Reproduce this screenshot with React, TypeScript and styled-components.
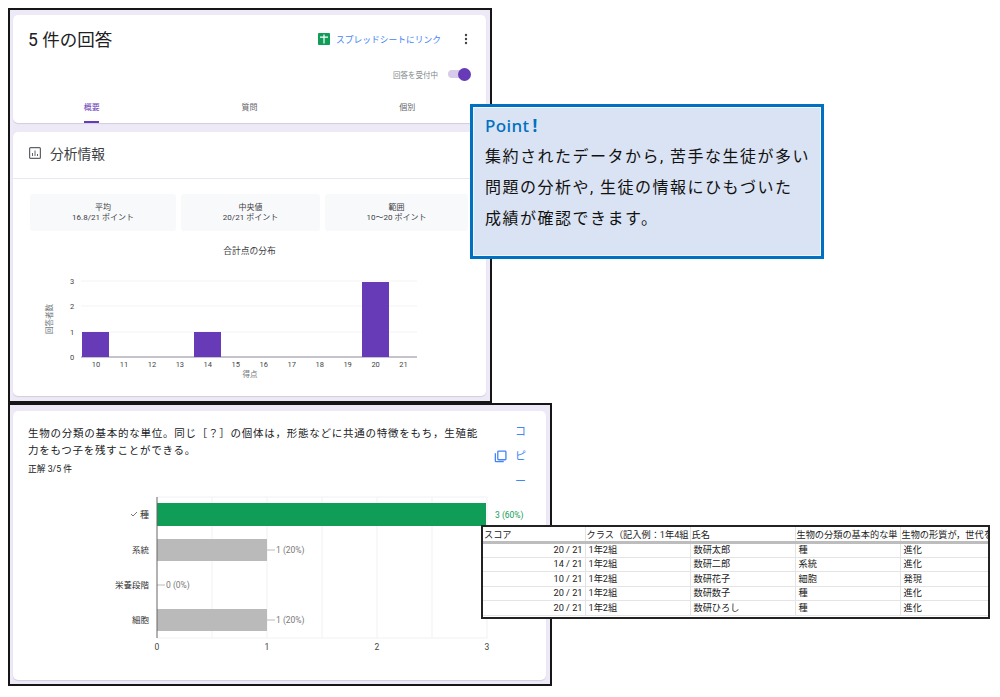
import React from 'react'
import styled, { createGlobalStyle } from 'styled-components'

const GlobalStyle = createGlobalStyle`
  html, body {
    margin: 0;
    padding: 0;
    background: #fff;
    font-family: Roboto, "Noto Sans CJK JP", sans-serif;
  }
`

const Page = styled.div`
  position: relative;
  width: 1000px;
  height: 697px;
  padding: 8px 0 0 8px;
  box-sizing: border-box;
  overflow: hidden;
`

const Shot = styled.section<{ $width: number; $height: number; $top: number }>`
  box-sizing: border-box;
  width: ${p => p.$width}px;
  height: ${p => p.$height}px;
  padding: ${p => p.$top}px 4px 0 3px;
  border: 2px solid #161616;
  background: #ede9f6;
  display: flex;
  flex-direction: column;
  gap: 9px;
`

const Card = styled.div<{ $height: number }>`
  height: ${p => p.$height}px;
  flex-shrink: 0;
  background: #fff;
  border-radius: 5px;
  box-shadow: 0 1px 1px rgba(60, 50, 90, 0.15);
  display: flex;
  flex-direction: column;
`

const HeaderRow = styled.div`
  box-sizing: border-box;
  height: 50px;
  padding: 0 18px 4px 15px;
  display: flex;
  align-items: center;
  justify-content: space-between;
`

const Title = styled.h1`
  margin: 0;
  font-size: 17.5px;
  font-weight: 400;
  color: #202124;
`

const HeaderActions = styled.div`
  display: flex;
  align-items: center;
  margin-top: 2px;
`

const SheetLink = styled.a`
  display: flex;
  align-items: center;
  gap: 6px;
  margin-right: 23px;
  font-size: 8.75px;
  color: #4285f4;
`

const AcceptRow = styled.div`
  height: 18px;
  padding-right: 18px;
  display: flex;
  align-items: center;
  justify-content: flex-end;
  gap: 10px;
  font-size: 7.5px;
  color: #80868b;
`

const Track = styled.div`
  width: 20px;
  height: 8px;
  border-radius: 4px;
  background: #d6cbe9;
  display: flex;
  align-items: center;
  justify-content: flex-end;
`

const Thumb = styled.div`
  width: 13px;
  height: 13px;
  flex-shrink: 0;
  margin-right: -3px;
  border-radius: 50%;
  background: #673ab7;
`

const Tabs = styled.div`
  height: 40px;
  display: grid;
  grid-template-columns: repeat(3, 1fr);
`

const Tab = styled.div<{ $active?: boolean }>`
  padding-top: 19px;
  display: flex;
  flex-direction: column;
  align-items: center;
  font-size: 8px;
  line-height: 12px;
  color: ${p => (p.$active ? '#673ab7' : '#5f6368')};
`

const TabMark = styled.div`
  width: 15px;
  height: 2px;
  margin-top: auto;
  background: #673ab7;
`

const SectionHead = styled.div`
  box-sizing: border-box;
  height: 47px;
  padding: 0 0 4px 16px;
  border-bottom: 1px solid #e8e8ee;
  display: flex;
  align-items: center;
  gap: 9px;
  font-size: 13.75px;
  color: #3c4043;
`

const Stats = styled.div`
  margin: 15px 18px 0 17px;
  display: grid;
  grid-template-columns: 146fr 139fr 143fr;
  gap: 5px;
`

const Stat = styled.div`
  height: 36px;
  padding-top: 1px;
  border-radius: 3px;
  background: #f8f9fa;
  display: flex;
  flex-direction: column;
  align-items: center;
  justify-content: center;
  color: #3c4043;
  font-size: 8px;
  line-height: 10px;
`

const ChartTitle = styled.div`
  margin-top: 14px;
  text-align: center;
  font-size: 8.75px;
  line-height: 12px;
  color: #3c4043;
`

const Chart = styled.svg`
  display: block;
  font-family: Roboto, "Noto Sans CJK JP", sans-serif;
`

const QuestionHead = styled.div`
  padding: 8px 0 0 15px;
  display: flex;
`

const QuestionBody = styled.div`
  width: 456px;
  margin-top: 6px;
  flex-shrink: 0;
`

const QuestionText = styled.p`
  margin: 0;
  font-size: 10.5px;
  letter-spacing: 0.75px;
  line-height: 17px;
  color: #202124;
`

const Score = styled.div`
  margin-top: 4px;
  font-size: 8.75px;
  line-height: 12px;
  color: #202124;
`

const CopyAction = styled.div`
  margin-left: 10px;
  display: flex;
  align-items: center;
  gap: 8px;
  color: #4285f4;
`

const CopyLetters = styled.div`
  display: flex;
  flex-direction: column;
  font-size: 11px;
  line-height: 25px;
`

const PointBox = styled.aside`
  position: absolute;
  left: 470px;
  top: 104px;
  box-sizing: border-box;
  width: 354px;
  height: 155px;
  padding: 8px 0 0 12px;
  border: 3px solid #0070c0;
  outline: 1px solid #f0f4fb;
  outline-offset: -4px;
  background: #dae3f3;
  color: #111;
`

const PointTitle = styled.div`
  font-family: "Noto Sans", sans-serif;
  font-size: 17px;
  font-weight: 500;
  line-height: 22px;
  color: #0070c0;
  letter-spacing: 0.4px;
`

const PointMark = styled.span`
  margin-left: 3px;
  font-weight: 700;
`

const PointText = styled.p`
  margin: 4px 0 0;
  font-size: 16px;
  letter-spacing: 1.5px;
  line-height: 31px;
  white-space: nowrap;
`

const SheetBox = styled.div`
  position: absolute;
  left: 481px;
  top: 525px;
  box-sizing: border-box;
  width: 509px;
  height: 94px;
  border: 2px solid #222;
  background: #fff;
  overflow: hidden;
`

const SheetTable = styled.table`
  width: 507px;
  border-collapse: collapse;
  table-layout: fixed;
  font-size: 9.2px;
  color: #222;
`

const HeadCell = styled.th`
  height: 14px;
  padding: 0 0 0 1px;
  border-right: 1px solid #e4e4e4;
  border-bottom: 3px solid #bdbdbd;
  font-weight: 400;
  text-align: left;
  line-height: 13px;
  white-space: nowrap;
  overflow: hidden;
`

const Row = styled.tr`
  height: 14.5px;
`

const Cell = styled.td<{ $right?: boolean }>`
  padding: ${p => (p.$right ? '0 2px 0 0' : '0 0 0 3px')};
  border-right: 1px solid #e4e4e4;
  border-bottom: 1px solid #e4e4e4;
  text-align: ${p => (p.$right ? 'right' : 'left')};
  line-height: 12px;
  white-space: nowrap;
  overflow: hidden;
`

const columns = [102, 105, 105, 105, 90]
const headers = [
  'スコア',
  'クラス（記入例：1年4組',
  '氏名',
  '生物の分類の基本的な単',
  '生物の形質が，世代を',
]
const rows = [
  ['20 / 21', '1年2組', '数研太郎', '種', '進化'],
  ['14 / 21', '1年2組', '数研二郎', '系統', '進化'],
  ['10 / 21', '1年2組', '数研花子', '細胞', '発現'],
  ['20 / 21', '1年2組', '数研数子', '種', '進化'],
  ['20 / 21', '1年2組', '数研ひろし', '種', '進化'],
]

const histogramLabels = [10, 11, 12, 13, 14, 15, 16, 17, 18, 19, 20, 21]
const histogramBars = [
  { x: 82, y: 332, h: 25 },
  { x: 194, y: 332, h: 25 },
  { x: 362, y: 282, h: 75 },
]

const answers = [
  { label: '系統', y: 539, h: 22, w: 110, text: '1 (20%)' },
  { label: '栄養段階', y: 574, h: 22, w: 0, text: '0 (0%)' },
  { label: '細胞', y: 609, h: 22, w: 110, text: '1 (20%)' },
]

const Histogram = () => (
  <Chart width={473} height={139} viewBox="13 257 473 139">
    {[281, 306, 332].map(y => (
      <line key={y} x1={81} x2={417} y1={y} y2={y} stroke="#f3f3f3" />
    ))}
    <line x1={81} x2={417} y1={357} y2={357} stroke="#b4afbd" strokeWidth={1.5} />
    {histogramBars.map(b => (
      <rect key={b.x} x={b.x} y={b.y} width={27} height={b.h} fill="#673ab7" />
    ))}
    <g fontSize={7.5} fill="#444" textAnchor="middle">
      {[3, 2, 1, 0].map((n, i) => (
        <text key={n} x={72} y={[284, 309, 335, 360][i]}>
          {n}
        </text>
      ))}
      {histogramLabels.map((n, i) => (
        <text key={n} x={96 + i * 27.96} y={367}>
          {n}
        </text>
      ))}
    </g>
    <text x={250} y={377} fontSize={7.5} fill="#70757a" textAnchor="middle">
      得点
    </text>
    <text
      x={0}
      y={0}
      fontSize={7.5}
      fill="#70757a"
      textAnchor="middle"
      transform="translate(52 319) rotate(-90)"
    >
      回答者数
    </text>
  </Chart>
)

const AnswerChart = () => (
  <Chart width={534} height={186} viewBox="13 494 534 186">
    {[212, 267, 322, 377, 432, 487].map(x => (
      <line key={x} x1={x} x2={x} y1={497} y2={638} stroke="#f1f1f1" />
    ))}
    <line x1={157} x2={487} y1={497} y2={497} stroke="#f1f1f1" />
    <line x1={157} x2={487} y1={638} y2={638} stroke="#f1f1f1" />
    <rect x={157} y={503} width={329} height={23} fill="#0f9d58" />
    <path d="M131 514l2 2 4-4" fill="none" stroke="#555" strokeWidth={0.8} />
    <text x={149} y={518} fontSize={9} fill="#333" textAnchor="end">
      種
    </text>
    <text x={495} y={518} fontSize={8.5} fill="#0f9d58">
      3 (60%)
    </text>
    {answers.map(a => (
      <g key={a.label}>
        {a.w > 0 && <rect x={157} y={a.y} width={a.w} height={a.h} fill="#bababa" />}
        <line
          x1={157 + a.w}
          x2={165 + a.w}
          y1={a.y + 11}
          y2={a.y + 11}
          stroke="#bababa"
        />
        <text x={149} y={a.y + 14} fontSize={8.5} fill="#333" textAnchor="end">
          {a.label}
        </text>
        <text x={166 + a.w} y={a.y + 14} fontSize={8.5} fill="#777">
          {a.text}
        </text>
      </g>
    ))}
    <line x1={157} x2={157} y1={497} y2={638} stroke="#666" />
    <g fontSize={8.5} fill="#444" textAnchor="middle">
      {[0, 1, 2, 3].map(n => (
        <text key={n} x={157 + n * 110} y={650}>
          {n}
        </text>
      ))}
    </g>
  </Chart>
)

const App = () => (
  <>
    <GlobalStyle />
    <Page>
      <Shot $width={484} $height={395} $top={5}>
        <Card $height={108}>
          <HeaderRow>
            <Title>5 件の回答</Title>
            <HeaderActions>
              <SheetLink>
                <svg width="12" height="12" viewBox="0 0 12 12">
                  <rect width="12" height="12" rx="1" fill="#0f9d58" />
                  <path d="M2 3.6h3.4V1.6h1.2v2H10v1.2H6.6v5.6H5.4V4.8H2z" fill="#fff" />
                </svg>
                スプレッドシートにリンク
              </SheetLink>
              <svg width="4" height="12" viewBox="0 0 4 12">
                <circle cx="2" cy="2" r="1.2" fill="#444" />
                <circle cx="2" cy="6" r="1.2" fill="#444" />
                <circle cx="2" cy="10" r="1.2" fill="#444" />
              </svg>
            </HeaderActions>
          </HeaderRow>
          <AcceptRow>
            回答を受付中
            <Track>
              <Thumb />
            </Track>
          </AcceptRow>
          <Tabs>
            <Tab $active>
              概要
              <TabMark />
            </Tab>
            <Tab>質問</Tab>
            <Tab>個別</Tab>
          </Tabs>
        </Card>
        <Card $height={264}>
          <SectionHead>
            <svg width="12" height="12" viewBox="0 0 12 12" fill="none">
              <rect x="0.6" y="0.6" width="10.8" height="10.8" rx="1" stroke="#5f6368" strokeWidth="1.2" />
              <path d="M3.5 9V6M6 9V3.5M8.5 9V7" stroke="#5f6368" />
            </svg>
            分析情報
          </SectionHead>
          <Stats>
            <Stat>
              平均
              <span>16.8/21 ポイント</span>
            </Stat>
            <Stat>
              中央値
              <span>20/21 ポイント</span>
            </Stat>
            <Stat>
              範囲
              <span>10～20 ポイント</span>
            </Stat>
          </Stats>
          <ChartTitle>合計点の分布</ChartTitle>
          <Histogram />
        </Card>
      </Shot>
      <Shot $width={544} $height={283} $top={6}>
        <Card $height={269}>
          <QuestionHead>
            <QuestionBody>
              <QuestionText>
                生物の分類の基本的な単位。同じ［？］の個体は，形態などに共通の特徴をもち，生殖能力をもつ子を残すことができる。
              </QuestionText>
              <Score>正解 3/5 件</Score>
            </QuestionBody>
            <CopyAction>
              <svg width="13" height="13" viewBox="0 0 24 24" fill="none" stroke="#4285f4" strokeWidth="2.4">
                <rect x="7" y="2" width="15" height="16" rx="1.5" />
                <path d="M2.5 6v14.5a1 1 0 0 0 1 1H18" />
              </svg>
              <CopyLetters>
                <span>コ</span>
                <span>ピ</span>
                <span>ー</span>
              </CopyLetters>
            </CopyAction>
          </QuestionHead>
          <AnswerChart />
        </Card>
      </Shot>
      <PointBox>
        <PointTitle>
          Point<PointMark>!</PointMark>
        </PointTitle>
        <PointText>
          集約されたデータから, 苦手な生徒が多い
          <br />
          問題の分析や, 生徒の情報にひもづいた
          <br />
          成績が確認できます。
        </PointText>
      </PointBox>
      <SheetBox>
        <SheetTable>
          <colgroup>
            {columns.map((w, i) => (
              <col key={i} width={w} />
            ))}
          </colgroup>
          <thead>
            <tr>
              {headers.map(h => (
                <HeadCell key={h}>{h}</HeadCell>
              ))}
            </tr>
          </thead>
          <tbody>
            {rows.map((row, r) => (
              <Row key={r}>
                {row.map((value, c) => (
                  <Cell key={c} $right={c === 0}>
                    {value}
                  </Cell>
                ))}
              </Row>
            ))}
          </tbody>
        </SheetTable>
      </SheetBox>
    </Page>
  </>
)

export default App
